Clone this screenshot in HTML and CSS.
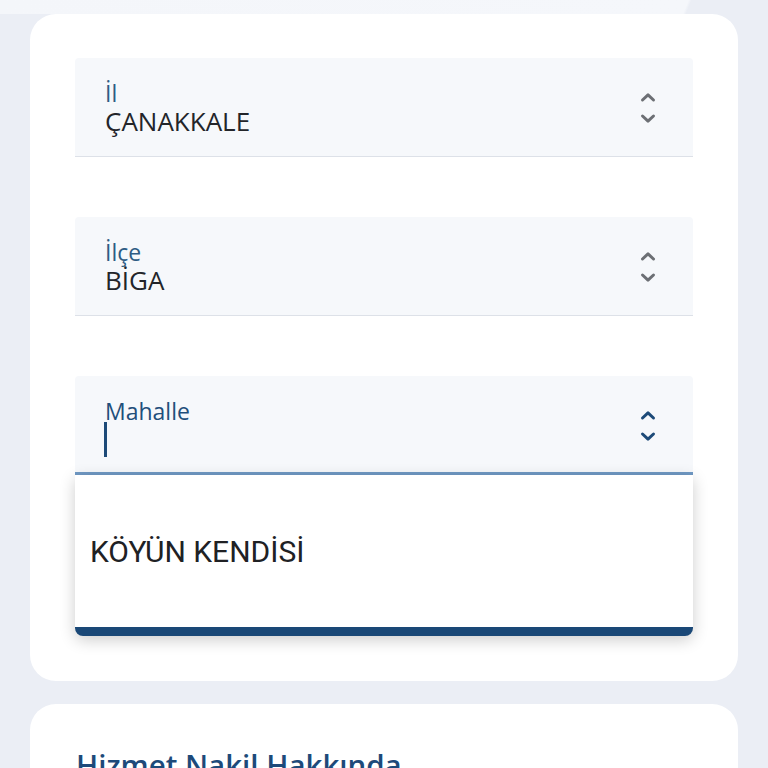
FILE: index.html
```html
<!DOCTYPE html>
<html lang="tr">
<head>
<meta charset="utf-8">
<title>Adres</title>
<link rel="stylesheet" href="styles.css">
</head>
<body>
<div class="top-strip"></div>
<section class="card">
  <div class="field">
    <div class="field-text">
      <div class="label">İl</div>
      <div class="value">ÇANAKKALE</div>
    </div>
    <svg class="chev" width="16" height="34" viewBox="0 0 16 34" aria-hidden="true">
      <polyline points="2.5,8 8,2.8 13.5,8" />
      <polyline points="2.5,24 8,29.2 13.5,24" />
    </svg>
  </div>
  <div class="field">
    <div class="field-text">
      <div class="label">İlçe</div>
      <div class="value">BİGA</div>
    </div>
    <svg class="chev" width="16" height="34" viewBox="0 0 16 34" aria-hidden="true">
      <polyline points="2.5,8 8,2.8 13.5,8" />
      <polyline points="2.5,24 8,29.2 13.5,24" />
    </svg>
  </div>
  <div class="field field-active">
    <div class="field-text">
      <div class="label">Mahalle</div>
      <div class="value"><span class="caret"></span></div>
    </div>
    <svg class="chev" width="16" height="34" viewBox="0 0 16 34" aria-hidden="true">
      <polyline points="2.5,8 8,2.8 13.5,8" />
      <polyline points="2.5,24 8,29.2 13.5,24" />
    </svg>
  </div>
  <div class="menu">
    <div class="menu-item">KÖYÜN KENDİSİ</div>
  </div>
</section>
<section class="card card-info">
  <h2 class="info-title">Hizmet Nakil Hakkında</h2>
</section>
</body>
</html>
```
FILE: styles.css
```css
html, body {
  margin: 0;
  padding: 0;
}
body {
  background: #ebeef5;
  font-family: "Open Sans", "Noto Sans", sans-serif;
  width: 768px;
  height: 768px;
  overflow: hidden;
}
.top-strip {
  height: 14px;
  background: linear-gradient(112deg, #f4f6fa 0, #f5f7fb 89%, #ebeef5 89.4%);
}
.card {
  margin: 0 30px;
  background: #ffffff;
  border-radius: 26px;
  padding: 44px 45px 45px;
  display: flex;
  flex-direction: column;
}
.field {
  display: flex;
  align-items: flex-start;
  background: #f6f8fb;
  border-radius: 4px 4px 0 0;
  border-bottom: 1px solid #dde1e8;
  padding: 22px 37px 20px 30px;
  margin-bottom: 60px;
}
.field-text {
  flex: 1;
  display: flex;
  flex-direction: column;
}
.label {
  font-size: 23px;
  line-height: 26px;
  color: #2e5c84;
}
.value {
  font-size: 26px;
  line-height: 30px;
  height: 30px;
  color: #23252a;
  display: flex;
  align-items: center;
}
.chev {
  margin-top: 12px;
  fill: none;
  stroke: #6c6f74;
  stroke-width: 3;
  stroke-linecap: round;
  stroke-linejoin: round;
}
.field-active {
  margin-bottom: 0;
  padding-bottom: 18px;
  border-bottom: 3px solid #7099c4;
}
.field-active .label {
  color: #1f4f7b;
}
.field-active .chev {
  stroke: #1d4a78;
}
.caret {
  display: block;
  flex: none;
  width: 3px;
  height: 35px;
  margin-left: -1px;
  background: #1d4a78;
}
.menu {
  background: #ffffff;
  border-bottom: 9px solid #1a4877;
  border-radius: 0 0 8px 8px;
  box-shadow: 0 4px 16px rgba(0, 0, 0, 0.2);
}
.menu-item {
  height: 152px;
  display: flex;
  align-items: center;
  padding: 0 15px;
  font-family: Roboto, "Liberation Sans", sans-serif;
  font-size: 30px;
  color: #202124;
}
.card-info {
  margin-top: 23px;
  padding-top: 43px;
  padding-left: 46px;
}
.info-title {
  margin: 0;
  font-size: 29.5px;
  line-height: 36px;
  font-weight: 600;
  color: #1d4a7a;
}
```
